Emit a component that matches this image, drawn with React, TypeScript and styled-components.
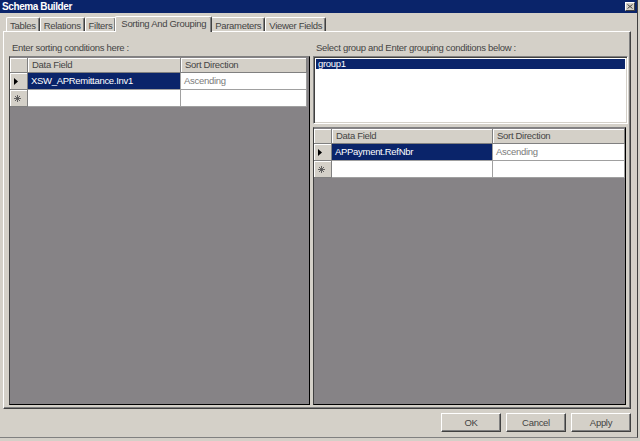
import React from "react";
import styled, { createGlobalStyle } from "styled-components";

const Global = createGlobalStyle`
  html, body { margin: 0; padding: 0; background: #d4d0c8; }
  body { font-family: "Liberation Sans", Arial, sans-serif; }
  * { box-sizing: border-box; }
`;

const FACE = "#d4d0c8";
const NAVY = "#0a246a";

const Window = styled.div`
  width: 640px;
  height: 441px;
  display: flex;
  flex-direction: column;
  background: ${FACE};
  padding-right: 2px;
`;

const WindowFrame = styled.div`
  flex: 1;
  display: flex;
  flex-direction: column;
  border-right: 1px solid #404040;
  border-bottom: 1px solid #808080;
  margin-bottom: 3px;
`;

const TitleBar = styled.div`
  height: 13px;
  background: ${NAVY};
  display: flex;
  align-items: center;
  justify-content: space-between;
  padding: 0 2px 0 2px;
`;

const Title = styled.span`
  color: #fff;
  font-weight: bold;
  font-size: 10px;
  letter-spacing: -0.4px;
  line-height: 13px;
`;

const CloseBtn = styled.div`
  width: 10px;
  height: 9px;
  background: ${FACE};
  border-top: 1px solid #fff;
  border-left: 1px solid #fff;
  border-right: 1px solid #404040;
  border-bottom: 1px solid #404040;
  display: flex;
  align-items: center;
  justify-content: center;
`;

const TabArea = styled.div`
  flex: 1;
  display: flex;
  flex-direction: column;
  padding: 2px 6px 0 3px;
`;

const TabStrip = styled.div`
  display: flex;
  align-items: flex-end;
  height: 16px;
  padding-left: 3px;
`;

const Tab = styled.div<{ $active?: boolean }>`
  height: ${(p) => (p.$active ? 16 : 14)}px;
  padding: 0 ${(p) => (p.$active ? 5 : 3)}px;
  margin: 0 ${(p) => (p.$active ? -1 : 0)}px ${(p) => (p.$active ? -1 : 0)}px;
  position: relative;
  z-index: ${(p) => (p.$active ? 2 : 1)};
  background: ${FACE};
  border-top: 1px solid #fff;
  border-left: 1px solid #fff;
  border-right: 1px solid #404040;
  box-shadow: inset -1px 0 0 #808080;
  border-radius: 2px 2px 0 0;
  font-size: 9.5px;
  letter-spacing: -0.3px;
  color: #444;
  line-height: ${(p) => (p.$active ? 14 : 13)}px;
  white-space: nowrap;
  padding-top: ${(p) => (p.$active ? 0 : 1)}px;
`;

const TabPage = styled.div`
  flex: 1;
  border-top: 1px solid #fff;
  border-left: 1px solid #fff;
  border-right: 1px solid #404040;
  border-bottom: 1px solid #404040;
  box-shadow: inset -1px -1px 0 #808080;
  display: grid;
  grid-template-columns: 301px 1fr;
  column-gap: 3px;
  padding: 0 2px 3px 5px;
`;

const Column = styled.div`
  display: flex;
  flex-direction: column;
  min-height: 0;
`;

const Label = styled.div`
  height: 24px;
  padding-top: 10px;
  font-size: 9.5px;
  letter-spacing: -0.3px;
  color: #444;
  line-height: 11px;
  padding-left: 3px;
  white-space: nowrap;
`;

const ListBox = styled.div`
  height: 68px;
  background: #fff;
  border-top: 1px solid #808080;
  border-left: 1px solid #808080;
  border-right: 1px solid #fff;
  border-bottom: 1px solid #fff;
  box-shadow: inset 1px 1px 0 #404040, inset -1px -1px 0 ${FACE};
  padding: 2px 2px;
  margin-bottom: 3px;
`;

const ListItem = styled.div<{ $selected?: boolean }>`
  height: 10px;
  line-height: 10px;
  font-size: 9.5px;
  letter-spacing: -0.3px;
  padding-left: 2px;
  background: ${(p) => (p.$selected ? NAVY : "transparent")};
  color: ${(p) => (p.$selected ? "#fff" : "#000")};
`;

const GridBox = styled.div<{ $mr?: number }>`
  flex: 1;
  background: #868386;
  border: 1px solid #000;
  border-top-color: #808080;
  border-left-color: #404040;
  margin-right: ${(p) => p.$mr ?? 0}px;
  padding: 1px 0 0 0;
`;

const Table = styled.div<{ $cols: string }>`
  display: grid;
  grid-template-columns: ${(p) => p.$cols};
  grid-template-rows: 15px 17px 17px;
`;

const HeadCell = styled.div`
  background: ${FACE};
  border-right: 1px solid #808080;
  border-bottom: 1px solid #808080;
  box-shadow: inset 1px 1px 0 #fff;
  font-size: 9.5px;
  letter-spacing: -0.3px;
  color: #444;
  line-height: 14px;
  padding-left: 4px;
  white-space: nowrap;
`;

const RowHead = styled.div`
  background: ${FACE};
  border-right: 1px solid #808080;
  border-bottom: 1px solid #808080;
  box-shadow: inset 1px 1px 0 #fff;
  display: flex;
  align-items: center;
  padding-left: 4px;
  font-size: 9px;
  color: #333;
`;

const Cell = styled.div<{ $selected?: boolean; $dim?: boolean }>`
  background: ${(p) => (p.$selected ? NAVY : "#fff")};
  color: ${(p) => (p.$selected ? "#fff" : p.$dim ? "#7a7a7a" : "#000")};
  border-right: 1px solid #a0a0a0;
  border-bottom: 1px solid #a0a0a0;
  font-size: 9.5px;
  letter-spacing: -0.3px;
  line-height: 16px;
  padding-left: 3px;
  white-space: nowrap;
  overflow: hidden;
`;

const Footer = styled.div`
  height: 28px;
  display: flex;
  justify-content: flex-end;
  align-items: flex-start;
  gap: 5px;
  padding: 4px 0 0 0;
`;

const Button = styled.div`
  width: 60px;
  height: 19px;
  background: ${FACE};
  border-top: 1px solid #fff;
  border-left: 1px solid #fff;
  border-right: 1px solid #404040;
  border-bottom: 1px solid #404040;
  box-shadow: inset -1px -1px 0 #808080;
  display: flex;
  align-items: center;
  justify-content: center;
  font-size: 9.5px;
  letter-spacing: -0.3px;
  color: #444;
`;

const Arrow = () => (
  <svg width="4" height="7" viewBox="0 0 4 7">
    <path d="M0 0 L4 3.5 L0 7 Z" fill="#000" />
  </svg>
);

const Star = () => (
  <svg width="7" height="7" viewBox="0 0 7 7">
    <path d="M3.5 0 V7 M0 3.5 H7 M1 1 L6 6 M6 1 L1 6" stroke="#555" strokeWidth="0.9" />
  </svg>
);

const CloseX = () => (
  <svg width="6" height="5" viewBox="0 0 6 5">
    <path d="M0.5 0.5 L5.5 4.5 M5.5 0.5 L0.5 4.5" stroke="#444" strokeWidth="1" />
  </svg>
);

type GridProps = { cols: string; field: string; mr?: number };

const DataGrid = ({ cols, field, mr }: GridProps) => (
  <GridBox $mr={mr}>
    <Table $cols={cols}>
      <HeadCell />
      <HeadCell>Data Field</HeadCell>
      <HeadCell>Sort Direction</HeadCell>
      <RowHead>
        <Arrow />
      </RowHead>
      <Cell $selected>{field}</Cell>
      <Cell $dim>Ascending</Cell>
      <RowHead>
        <Star />
      </RowHead>
      <Cell />
      <Cell />
    </Table>
  </GridBox>
);

const tabs = ["Tables", "Relations", "Filters", "Sorting And Grouping", "Parameters", "Viewer Fields"];

export default function App() {
  return (
    <>
      <Global />
      <Window>
        <WindowFrame>
          <TitleBar>
            <Title>Schema Builder</Title>
            <CloseBtn>
              <CloseX />
            </CloseBtn>
          </TitleBar>
          <TabArea>
            <TabStrip>
              {tabs.map((t) => (
                <Tab key={t} $active={t === "Sorting And Grouping"}>
                  {t}
                </Tab>
              ))}
            </TabStrip>
            <TabPage>
              <Column>
                <Label>Enter sorting conditions here :</Label>
                <DataGrid cols="18px 153px 126px" field="XSW_APRemittance.Inv1" />
              </Column>
              <Column>
                <Label>Select group and Enter grouping conditions below :</Label>
                <ListBox>
                  <ListItem $selected>group1</ListItem>
                </ListBox>
                <DataGrid cols="18px 161px 132px" field="APPayment.RefNbr" mr={2} />
              </Column>
            </TabPage>
            <Footer>
              <Button>OK</Button>
              <Button>Cancel</Button>
              <Button>Apply</Button>
            </Footer>
          </TabArea>
        </WindowFrame>
      </Window>
    </>
  );
}
